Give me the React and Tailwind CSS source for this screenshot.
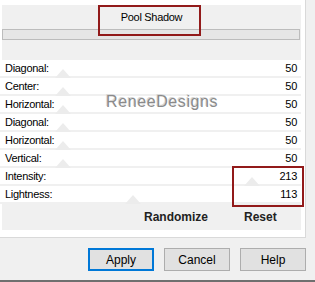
const rows = [
  { label: 'Diagonal:', value: 50, thumb: 63 },
  { label: 'Center:', value: 50, thumb: 63 },
  { label: 'Horizontal:', value: 50, thumb: 63 },
  { label: 'Diagonal:', value: 50, thumb: 63 },
  { label: 'Horizontal:', value: 50, thumb: 63 },
  { label: 'Vertical:', value: 50, thumb: 63 },
  { label: 'Intensity:', value: 213, thumb: 252 },
  { label: 'Lightness:', value: 113, thumb: 133 },
];

function Thumb({ x }) {
  return (
    <svg className="absolute bottom-[-2px]" style={{ left: x - 8 }} width="16" height="9" viewBox="0 0 16 9">
      <polygon points="8,0 16,9 0,9" fill="#ececec" />
    </svg>
  );
}

export default function App() {
  return (
    <div
      className="w-[315px] h-[282px] bg-[#f0f0f0] flex flex-col text-black overflow-hidden"
      style={{ fontFamily: '"Liberation Sans", Arial, sans-serif' }}
    >
      <div className="relative w-[306px] h-[238px] bg-white border-r border-b border-[#d9d9d9] pt-[5px]">
        <div className="ml-[2px] w-[299px] h-[55px] bg-[#f0f0f0] flex flex-col items-center">
          <div className="h-[24px] flex items-center text-[11px] tracking-[-0.3px]">Pool Shadow</div>
          <div className="self-start w-[298px] h-[11px] bg-[#e6e6e6] border border-[#bcbcbc]"></div>
        </div>

        <div className="w-[301px]">
          {rows.map((r, i) => (
            <div
              key={i}
              className="relative h-[18px] flex items-center justify-between pl-[5px] pr-[4px] border-b-2 border-[#f0f0f0] text-[11px] tracking-[-0.3px]"
            >
              <Thumb x={r.thumb} />
              <span className="relative">{r.label}</span>
              <span className="relative">{r.value}</span>
            </div>
          ))}
        </div>

        <div className="ml-[2px] w-[299px] h-[26px] bg-[#f0f0f0] flex items-center pl-[142px] gap-[36px] text-[12px] font-bold text-[#222]">
          <span>Randomize</span>
          <span>Reset</span>
        </div>

        <div
          className="absolute left-[106px] top-[90px] text-[16px] tracking-[0.6px] text-[#8a8a8a]"
          style={{ textShadow: '1px 1px 0 #fff, -1px -1px 0 #d8d8d8' }}
        >
          ReneeDesigns
        </div>

        <div className="absolute left-[98px] top-[5px] w-[103px] h-[31px] border-2 border-[#921a1a]"></div>
        <div className="absolute left-[232px] top-[166px] w-[72px] h-[41px] border-2 border-[#921a1a]"></div>
      </div>

      <div className="flex pl-[88px] gap-[10px] mt-[10px] text-[12px]">
        <button className="w-[66px] h-[23px] bg-[#e1e1e1] border-2 border-[#0078d7]">Apply</button>
        <button className="w-[66px] h-[23px] bg-[#e1e1e1] border border-[#adadad]">Cancel</button>
        <button className="w-[66px] h-[23px] bg-[#e1e1e1] border border-[#adadad]">Help</button>
      </div>

      <div className="mt-auto h-[2px] bg-[#6f6f6f]"></div>
    </div>
  );
}
